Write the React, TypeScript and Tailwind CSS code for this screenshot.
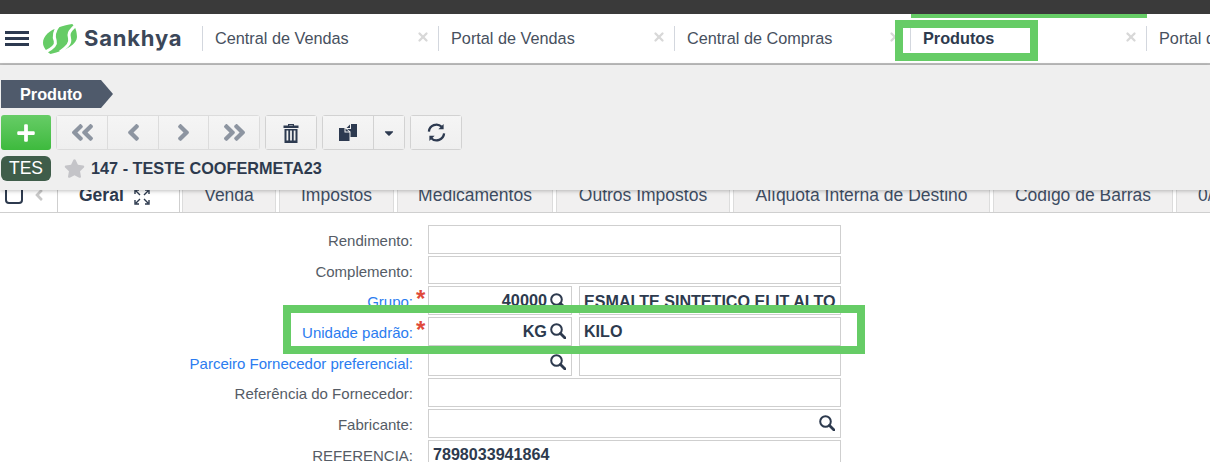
import { X } from 'lucide-react';
import { FaAngleDoubleLeft, FaAngleDoubleRight, FaAngleLeft, FaAngleRight, FaStar, FaCaretDown, FaPlus } from 'react-icons/fa';

const topTabs = [
  { label: 'Central de Vendas' },
  { label: 'Portal de Vendas' },
  { label: 'Central de Compras' },
  { label: 'Produtos', active: true },
  { label: 'Portal de Vendas' },
];

const subTabs = [
  { label: 'Venda', w: 'w-[94px]' },
  { label: 'Impostos', w: 'w-[115px]' },
  { label: 'Medicamentos', w: 'w-[156px]' },
  { label: 'Outros Impostos', w: 'w-[174px]' },
  { label: 'Alíquota Interna de Destino', w: 'w-[257px]' },
  { label: 'Código de Barras', w: 'w-[180px]' },
];

function Logo() {
  return (
    <svg viewBox="0 0 100 88" className="w-[34px] h-[30px]">
      <path d="M86 0C96 8 100 25 100 38C100 58 70 78 22 88C10 80 0 68 0 55C0 35 20 18 45 10C60 5 75 2 86 0Z" fill="#66cc66" />
      <path d="M46 4C30 25 32 40 36 50C40 62 28 72 8 82" fill="none" stroke="#fff" strokeWidth="9" />
      <path d="M94 6C76 22 74 30 78 42C82 56 72 66 50 82" fill="none" stroke="#fff" strokeWidth="9" />
    </svg>
  );
}

function SearchIcon({ className = '' }: { className?: string }) {
  return (
    <svg viewBox="0 0 16 16" className={`w-[16px] h-[16px] shrink-0 ${className}`} fill="none" stroke="#2d3a4e">
      <circle cx="6.500" cy="6.500" r="5.300" strokeWidth="2" />
      <path d="M10.500 10.500L15 15" strokeWidth="2.800" strokeLinecap="round" />
    </svg>
  );
}

function TrashIcon() {
  return (
    <svg viewBox="0 0 16 20" className="w-[16px] h-[20px]" fill="#2d3a50">
      <path d="M5 2.500V1h6v1.500h4.500V5H.5V2.500zM6.200 2.500h3.600V2H6.200z" />
      <path fillRule="evenodd" d="M1.500 6h13v14h-13zM3.500 7.500v10h1.800v-10zM7.100 7.500v10h1.800v-10zM10.700 7.500v10h1.800v-10z" />
    </svg>
  );
}

function CopyIcon() {
  return (
    <svg viewBox="0 0 18 17" className="w-[18px] h-[17px]" fill="#2d3a50">
      <path d="M0 4H5.500V8.500H10.500V17H0Z" />
      <path d="M6.500 4.500L10 7.500H6.500Z" />
      <path d="M11 0.500V4H7.500Z" />
      <path d="M12 0H18V13H11.500V7.500L8 5H12Z" />
    </svg>
  );
}

function RefreshIcon() {
  return (
    <svg viewBox="0 0 20 20" className="w-[19px] h-[19px]" fill="none" stroke="#2d3a50" strokeWidth="2.400">
      <path d="M2 9A8 8 0 0 1 15.500 4" />
      <path d="M18 11A8 8 0 0 1 4.500 16" />
      <path d="M17.500 1v5.500H12z" fill="#2d3a50" stroke="none" />
      <path d="M2.500 19v-5.500H8z" fill="#2d3a50" stroke="none" />
    </svg>
  );
}

function ToolButton({ children, className = '' }: { children: React.ReactNode; className?: string }) {
  return (
    <button className={`h-full flex items-center justify-center bg-gradient-to-b from-[#f5f5f5] to-[#efefef] ${className}`}>
      {children}
    </button>
  );
}

function Row({ label, link, required, children }: { label: string; link?: boolean; required?: boolean; children: React.ReactNode }) {
  return (
    <div className="flex h-[28.67px] mb-[2px]">
      <div className={`w-[413px] shrink-0 flex items-center justify-end pt-[4px] text-[15px] whitespace-nowrap ${link ? 'text-[#2b7cf0]' : 'text-[#555c66]'}`}>{label}:</div>
      <div className="w-[15px] shrink-0 relative">
        {required && <span className="absolute left-[3px] top-[-1px] text-[#e04a3a] text-[24px] leading-[28px] font-bold">*</span>}
      </div>
      <div className="flex gap-[7px] h-full">{children}</div>
    </div>
  );
}

function Lookup({ value, wide }: { value?: string; wide?: boolean }) {
  return (
    <div className={`${wide ? 'w-[413px]' : 'w-[144px]'} h-full border border-[#cfcfcf] flex items-center justify-end pr-[5px] gap-[3px]`}>
      {value && <span className="font-bold text-[#2d3a4e] text-[16.250px]">{value}</span>}
      <SearchIcon />
    </div>
  );
}

function Box({ value, className = 'w-[413px]' }: { value?: string; className?: string }) {
  return (
    <div className={`${className} h-full border border-[#cfcfcf] flex items-center pl-[4px] font-bold text-[#2d3a4e] text-[16.100px] whitespace-nowrap overflow-hidden`}>
      {value}
    </div>
  );
}

export default function App() {
  return (
    <div className="relative w-[1210px] h-[462px] overflow-hidden bg-white font-['Liberation_Sans',Arial,sans-serif]">
      <div className="h-[14px] bg-[#3a3a3a]" />

      <header className="h-[51px] bg-white border-b-2 border-[#bdbdbd] flex items-center overflow-hidden">
        <div className="w-[24px] shrink-0 ml-[5px] flex flex-col gap-[3px]">
          <span className="h-[3px] bg-[#2d3a50]" />
          <span className="h-[3px] bg-[#2d3a50]" />
          <span className="h-[3px] bg-[#2d3a50]" />
        </div>
        <div className="ml-[14px] shrink-0"><Logo /></div>
        <span className="ml-[7px] w-[118px] shrink-0 text-[22px] font-bold text-[#3b4759] font-['Inter',sans-serif] tracking-[0.8px]">Sankhya</span>
        <div className="flex shrink-0">
          {topTabs.map((t, i) => (
            <div key={i} className="w-[236px] h-[25px] shrink-0 border-l border-[#d3d7de] flex items-center pl-[12px] relative">
              <span className={`text-[16.250px] whitespace-nowrap ${t.active ? 'font-bold text-[#2d3a4e]' : 'text-[#47505e]'}`}>{t.label}</span>
              <X className="absolute right-[8px] top-[4px] w-[14px] h-[14px] text-[#d8d8d8]" strokeWidth={4} />
            </div>
          ))}
        </div>
      </header>

      <section className="relative z-10 h-[125px] bg-[#efefef] shadow-[0_1px_4px_rgba(0,0,0,0.25)] pl-[1px] pt-[15px]">
        <div className="relative w-[100px] h-[28px] bg-[#4f5a6b] flex items-center pl-[19px] text-white font-bold text-[16.250px]">
          Produto
          <span className="absolute left-full top-0 border-y-[14px] border-y-transparent border-l-[12px] border-l-[#4f5a6b]" />
        </div>

        <div className="flex h-[35px] mt-[7px]">
          <button className="w-[50px] h-full rounded-[3px] bg-gradient-to-b from-[#66cc66] to-[#3dba3d] flex items-center justify-center text-white text-[20px]">
            <FaPlus />
          </button>
          <div className="ml-[5px] flex h-full border border-[#dcdcdc] rounded-[3px] divide-x divide-[#dcdcdc] text-[#8d95a1]">
            <ToolButton className="w-[51px] text-[27px]"><FaAngleDoubleLeft /></ToolButton>
            <ToolButton className="w-[51px] text-[27px]"><FaAngleLeft /></ToolButton>
            <ToolButton className="w-[50px] text-[27px]"><FaAngleRight /></ToolButton>
            <ToolButton className="w-[50px] text-[27px]"><FaAngleDoubleRight /></ToolButton>
          </div>
          <div className="ml-[5px] h-full border border-[#d2d2d2] rounded-[3px] w-[52px]">
            <ToolButton className="w-full"><TrashIcon /></ToolButton>
          </div>
          <div className="ml-[5px] flex h-full border border-[#d2d2d2] rounded-[3px] divide-x divide-[#d2d2d2]">
            <ToolButton className="w-[51px]"><CopyIcon /></ToolButton>
            <ToolButton className="w-[30px] text-[#2d3a50] text-[14px]"><FaCaretDown /></ToolButton>
          </div>
          <div className="ml-[5px] h-full border border-[#d2d2d2] rounded-[3px] w-[52px]">
            <ToolButton className="w-full"><RefreshIcon /></ToolButton>
          </div>
        </div>

        <div className="flex items-center h-[25px] mt-[6px]">
          <span className="w-[50px] h-full rounded-[6px] bg-[#3f5d4a] text-white text-[17.500px] flex items-center justify-center">TES</span>
          <FaStar className="ml-[13px] text-[21px] text-[#c4c4c8]" />
          <span className="ml-[6px] font-bold text-[16.250px] text-[#2d3a4e] whitespace-nowrap">147 - TESTE COOFERMETA23</span>
        </div>
      </section>

      {/* tab strip slides under the gray panel, only its lower half shows */}
      <div className="relative -mt-[12px] h-[35px] flex border-b border-[#cfcfcf] overflow-hidden">
        <div className="w-[57px] shrink-0 h-full relative">
          <span className="absolute left-[5px] top-[5px] w-[18px] h-[21px] border-2 border-[#2d3a4e] rounded-[4px]" />
          <FaAngleLeft className="absolute left-[30px] top-[8px] text-[#c8c8c8] text-[18px]" />
        </div>
        <div className="w-[123px] shrink-0 h-full bg-white border-x border-[#cfcfcf] flex items-center justify-start pl-[21px] gap-[10px] text-[17.500px] font-bold text-[#2d3a4e]">
          Geral
          <svg viewBox="0 0 16 16" className="w-[16px] h-[16px] mt-[3px]" fill="none" stroke="#2d3a4e" strokeWidth="1.400">
            <path d="M1 5V1h4M11 1h4v4M1 11v4h4M15 11v4h-4M2 2l4 4M14 2l-4 4M2 14l4-4M14 14l-4-4" />
          </svg>
        </div>
        <div className="flex gap-[3px] ml-[2px] shrink-0">
          {subTabs.map((t) => (
            <div key={t.label} className={`${t.w} h-full shrink-0 bg-[#f1f0f0] border-x border-[#dcdcdc] flex items-center justify-center text-[17.500px] text-[#3e4d63] whitespace-nowrap`}>
              {t.label}
            </div>
          ))}
          <div className="w-[60px] h-full shrink-0 bg-[#f1f0f0] border-l border-[#dcdcdc] flex items-center pl-[21px] text-[17.500px] text-[#3e4d63] whitespace-nowrap">0/</div>
        </div>
      </div>

      <form className="pt-[12px]">
        <Row label="Rendimento"><Box /></Row>
        <Row label="Complemento"><Box /></Row>
        <Row label="Grupo" link required>
          <Lookup value="40000" />
          <Box value="ESMALTE SINTETICO ELIT ALTO" className="w-[262px]" />
        </Row>
        <Row label="Unidade padrão" link required>
          <Lookup value="KG" />
          <Box value="KILO" className="w-[262px]" />
        </Row>
        <Row label="Parceiro Fornecedor preferencial" link>
          <Lookup />
          <Box className="w-[262px]" />
        </Row>
        <Row label="Referência do Fornecedor"><Box /></Row>
        <Row label="Fabricante"><Lookup wide /></Row>
        <Row label="REFERENCIA"><Box value="7898033941864" /></Row>
      </form>

      {/* green highlight marks drawn over the screenshot */}
      <div className="absolute z-20 left-[911px] top-[14px] w-[236px] h-[4px] bg-[#66cc66]" />
      <div className="absolute z-20 left-[895px] top-[20px] w-[143px] h-[41px] border-[8px] border-[#66cc66]" />
      <div className="absolute z-20 left-[283px] top-[305px] w-[582px] h-[49px] border-[8px] border-[#66cc66]" />
    </div>
  );
}
